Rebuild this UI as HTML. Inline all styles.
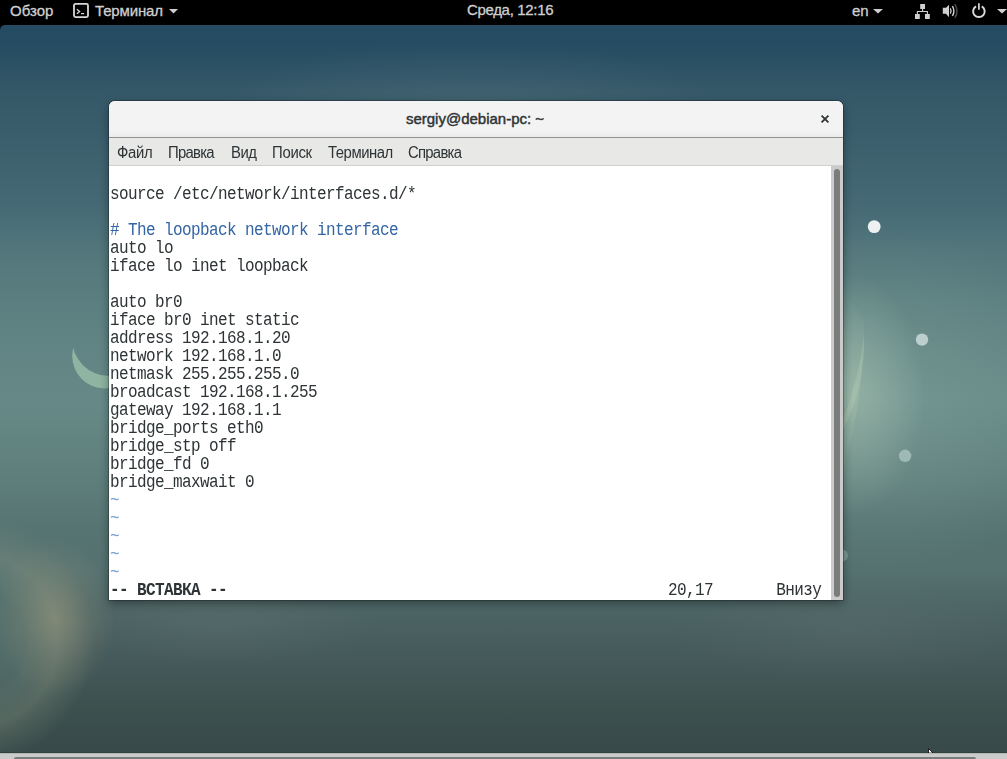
<!DOCTYPE html>
<html><head><meta charset="utf-8">
<style>
html,body{margin:0;padding:0;}
body{width:1007px;height:759px;overflow:hidden;position:relative;background:#3f5a5e;font-family:"Liberation Sans",sans-serif;}
#bg{position:absolute;left:0;top:0;width:1007px;height:759px;
background:
 radial-gradient(ellipse 60px 80px at 55px 618px, rgba(160,158,128,0.5), rgba(160,158,128,0.2) 55%, rgba(160,158,128,0) 100%),
 radial-gradient(circle at -30px 640px, rgba(140,150,130,0) 55px, rgba(140,150,130,0.3) 88px, rgba(140,150,130,0) 125px),
 radial-gradient(circle at -30px 640px, rgba(95,125,118,0.55) 0px, rgba(95,125,118,0.45) 60px, rgba(95,125,118,0) 95px),
 radial-gradient(ellipse 70px 120px at 855px 395px, rgba(175,200,180,0.5), rgba(175,200,180,0) 100%),
 radial-gradient(ellipse 200px 170px at 880px 400px, rgba(150,180,170,0.3), rgba(150,180,170,0) 100%),
 radial-gradient(ellipse 260px 80px at 470px 120px, rgba(100,130,140,0.28), rgba(100,130,140,0) 100%),
 radial-gradient(ellipse 160px 40px at 220px 625px, rgba(120,140,130,0.18), rgba(120,140,130,0) 100%),
 radial-gradient(ellipse 180px 50px at 850px 630px, rgba(120,140,130,0.15), rgba(120,140,130,0) 100%),
 linear-gradient(180deg,#244b61 25px,#254c62 45px,#355868 90px,#3a5d6b 130px,#446874 200px,#52767b 250px,#5b7f80 300px,#678a88 400px,#5e7e7b 480px,#567472 530px,#557170 570px,#4c6464 610px,#465b5c 650px,#3c504e 710px,#384a4a 752px);
}
#topbar{position:absolute;left:0;top:0;width:1007px;height:25px;background:#000;color:#cfcfcf;}
#topbar .tx{position:absolute;top:2px;font-size:15px;line-height:18px;white-space:pre;-webkit-text-stroke:0.3px #cfcfcf;}
#win{position:absolute;left:109px;top:101px;width:734px;height:499px;border-radius:6px 6px 0 0;box-shadow:0 3px 10px rgba(0,0,0,0.4),0 0 0 1px rgba(0,0,0,0.23);overflow:hidden;background:#fff;}
#title{position:absolute;left:0;top:0;width:734px;height:36px;background:linear-gradient(180deg,#f3f3f3 0px,#f3f3f3 30px,#ececec 36px);border-bottom:1px solid #94948e;}
#title .t{position:absolute;left:-1px;width:734px;top:10px;text-align:center;font-size:15px;line-height:16px;color:#2e3436;-webkit-text-stroke:0.45px #2e3436;}
#menu{position:absolute;left:0;top:37px;width:734px;height:27px;background:#e8e8e7;border-bottom:1px solid #d0d0cf;font-size:15px;color:#2e3436;}
#menu span{position:absolute;top:6px;line-height:18px;font-size:16px;letter-spacing:-0.3px;transform:scaleX(0.93);transform-origin:0 0;white-space:pre;}
#term{position:absolute;left:0;top:65px;width:722px;height:434px;background:#fff;overflow:hidden;}
.l{position:absolute;left:1px;margin-top:2px;white-space:pre;font-family:"Liberation Mono",monospace;font-size:16px;letter-spacing:-0.6px;line-height:15.789px;transform:scaleY(1.14);transform-origin:0 0;color:#2e3436;}
.c{color:#3465a4;}
.tl{color:#729fcf;}
#sb{position:absolute;left:722px;top:65px;width:12px;height:434px;background:#cbcbcb;}
#sb div{position:absolute;left:3px;top:3px;width:6px;height:428px;border-radius:3px;background:#7b7c7c;}
</style></head><body>
<div id="bg"></div>
<div style="position:absolute;left:0;top:25px;width:4px;height:4px;background:radial-gradient(circle at 4px 4px, rgba(0,0,0,0) 3px, #000 4.2px)"></div>
<svg id="deco" style="position:absolute;left:0;top:0" width="1007" height="759">
 <defs>
  <mask id="cm1"><rect x="0" y="0" width="1007" height="759" fill="black"/><circle cx="104.6" cy="356.1" r="32.4" fill="white"/><circle cx="109.3" cy="338.8" r="37.3" fill="black"/></mask>
  
 </defs>
 <rect x="0" y="0" width="1007" height="759" fill="#8fb4a2" mask="url(#cm1)"/>
 <linearGradient id="cg" x1="0" y1="0" x2="0" y2="1"><stop offset="0" stop-color="rgb(185,210,185)" stop-opacity="0"/><stop offset="0.6" stop-color="rgb(185,210,185)" stop-opacity="0.2"/><stop offset="1" stop-color="rgb(185,210,185)" stop-opacity="0.05"/></linearGradient><path d="M843 290 L864 320 Q864 400 843 470 Z" fill="url(#cg)"/><path d="M864 334 Q866 385 843 430 L843 418 Q859 380 864 334 Z" fill="rgba(195,215,185,0.25)"/>
 <circle cx="874.2" cy="226.6" r="6.4" fill="#eef1f2"/>
 <circle cx="922" cy="339.6" r="6.2" fill="#bccfce"/>
 <circle cx="905.1" cy="455.8" r="6.2" fill="#9fb9b4"/>
 <circle cx="842" cy="555.6" r="6" fill="#7a9791"/>
</svg>
<div style="position:absolute;left:0;top:752px;width:1007px;height:1px;background:#2f4141"></div>
<div style="position:absolute;left:0;top:753px;width:1007px;height:6px;background:#cacccb;border-top:1px solid #b9b6b0;box-sizing:border-box"></div>
<div style="position:absolute;left:14px;top:757px;width:962px;height:4px;border-radius:2px;background:#7a7d7d"></div>
<svg style="position:absolute;left:927px;top:748px" width="8" height="5"><path d="M1.5 0.5 L1.5 5 L6 5 Z" fill="#fff" stroke="#000" stroke-width="0.8"/></svg>

<div id="topbar">
 <span class="tx" style="left:10px">Обзор</span>
 <svg style="position:absolute;left:72px;top:2px" width="18" height="17" viewBox="0 0 18 17"><rect x="2" y="1.9" width="14" height="13.2" rx="1.5" fill="none" stroke="#d8d8d8" stroke-width="1.8"/><path d="M4.9 7.3 L7.6 9.5 L4.9 11.7" fill="none" stroke="#d8d8d8" stroke-width="1.3"/><path d="M9 11.6 H12.1" stroke="#d8d8d8" stroke-width="1.2"/></svg>
 <span class="tx" style="left:95px;letter-spacing:-0.15px">Терминал</span>
 <svg style="position:absolute;left:169px;top:9px" width="9" height="5"><path d="M0 0 H9 L4.5 4.5 Z" fill="#cfcfcf"/></svg>
 <span class="tx" style="left:467px;top:1px;font-size:15px;letter-spacing:-0.33px">Среда, 12:16</span>
 <span class="tx" style="left:852px">en</span>
 <svg style="position:absolute;left:873px;top:9px" width="10" height="5"><path d="M0 0 H10 L5 4.5 Z" fill="#cfcfcf"/></svg>
 <svg style="position:absolute;left:914px;top:4px" width="17" height="16" viewBox="0 0 17 16"><rect x="6.2" y="0" width="4.8" height="5" fill="#cfcfcf"/><rect x="1" y="10" width="4.8" height="5" fill="#cfcfcf"/><rect x="11" y="10" width="4.8" height="5" fill="#cfcfcf"/><path d="M8.6 5 V7.5 M3.4 10 V7.5 H13.4 V10" fill="none" stroke="#cfcfcf" stroke-width="1.1"/></svg>
 <svg style="position:absolute;left:942px;top:0px" width="18" height="22" viewBox="0 0 18 22"><path d="M0.8 7.8 H4 L7 4.8 V17.2 L4 13.7 H0.8 Z" fill="#d0d0d0"/><path d="M8.3 8.3 Q9.9 11 8.3 13.7" fill="none" stroke="#d0d0d0" stroke-width="1.3"/><path d="M10.4 6.1 Q13.4 11 10.4 15.9" fill="none" stroke="#d0d0d0" stroke-width="1.4"/><path d="M12.9 4.1 Q17 11 12.9 17.9" fill="none" stroke="#4a4a4a" stroke-width="1.5"/></svg>
 <svg style="position:absolute;left:971px;top:0px" width="16" height="22" viewBox="0 0 16 22"><path d="M5.0 6.3 A5.8 5.8 0 1 0 10.8 6.3" fill="none" stroke="#d8d8d8" stroke-width="2"/><path d="M7.9 3.2 V9.8" stroke="#d8d8d8" stroke-width="1.7"/></svg>
 <svg style="position:absolute;left:997px;top:9px" width="10" height="5"><path d="M0 0 H10 L5 4.5 Z" fill="#cfcfcf"/></svg>
</div>
<div id="win">
 <div id="title"><div class="t">sergiy@debian-pc: ~</div><svg style="position:absolute;left:711px;top:13px" width="10" height="10"><path d="M1.6 1.6 L8.4 8.4 M8.4 1.6 L1.6 8.4" stroke="#2e3436" stroke-width="1.8"/></svg></div>
 <div id="menu">
  <span style="left:7.5px">Файл</span>
  <span style="left:59.4px;letter-spacing:-0.8px">Правка</span>
  <span style="left:121.7px;letter-spacing:-0.5px">Вид</span>
  <span style="left:162.6px">Поиск</span>
  <span style="left:219.4px;letter-spacing:-0.5px">Терминал</span>
  <span style="left:298.9px;letter-spacing:-0.8px">Справка</span>
 </div>
 <div id="term"><div class=l style="top:18px">source /etc/network/interfaces.d/*</div><div class=l style="top:54px"><span class=c># The loopback network interface</span></div><div class=l style="top:72px">auto lo</div><div class=l style="top:90px">iface lo inet loopback</div><div class=l style="top:126px">auto br0</div><div class=l style="top:144px">iface br0 inet static</div><div class=l style="top:162px">address 192.168.1.20</div><div class=l style="top:180px">network 192.168.1.0</div><div class=l style="top:198px">netmask 255.255.255.0</div><div class=l style="top:216px">broadcast 192.168.1.255</div><div class=l style="top:234px">gateway 192.168.1.1</div><div class=l style="top:252px">bridge_ports eth0</div><div class=l style="top:270px">bridge_stp off</div><div class=l style="top:288px">bridge_fd 0</div><div class=l style="top:306px">bridge_maxwait 0</div><div class=l style="top:324px"><span class=tl>~</span></div><div class=l style="top:342px"><span class=tl>~</span></div><div class=l style="top:360px"><span class=tl>~</span></div><div class=l style="top:378px"><span class=tl>~</span></div><div class=l style="top:396px"><span class=tl>~</span></div><div class=l style="top:414px"><b>-- ВСТАВКА --</b>                                                 20,17       Внизу</div></div>
 <div id="sb"><div></div></div>
</div>
</body></html>
